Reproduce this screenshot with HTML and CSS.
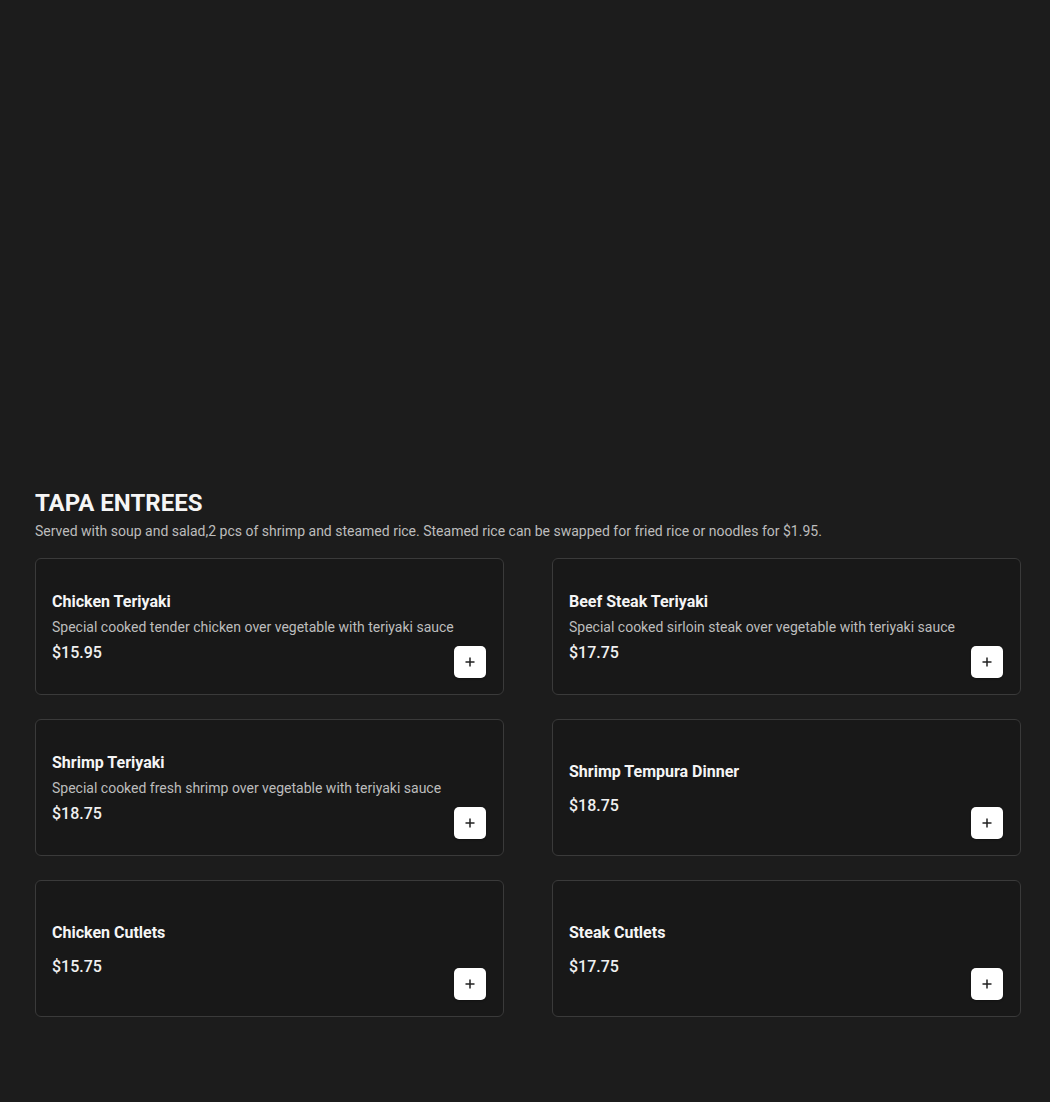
FILE: index.html
```html
<!DOCTYPE html>
<html lang="en">
<head>
<meta charset="utf-8">
<title>Tapa Entrees</title>
<link rel="stylesheet" href="styles.css">
</head>
<body>
<div class="hero"></div>
<section class="menu-section">
  <h2 class="section-title">TAPA ENTREES</h2>
  <p class="section-desc">Served with soup and salad,2 pcs of shrimp and steamed rice. Steamed rice can be swapped for fried rice or noodles for $1.95.</p>
  <div class="grid">
    <div class="card">
      <div class="info">
        <div class="name">Chicken Teriyaki</div>
        <div class="desc">Special cooked tender chicken over vegetable with teriyaki sauce</div>
        <div class="price">$15.95</div>
      </div>
      <button class="add" aria-label="Add"><svg viewBox="0 0 12 12" width="12" height="12"><path d="M6 1.5v9M1.5 6h9" stroke="#222" stroke-width="1.5" fill="none"/></svg></button>
    </div>
    <div class="card">
      <div class="info">
        <div class="name">Beef Steak Teriyaki</div>
        <div class="desc">Special cooked sirloin steak over vegetable with teriyaki sauce</div>
        <div class="price">$17.75</div>
      </div>
      <button class="add" aria-label="Add"><svg viewBox="0 0 12 12" width="12" height="12"><path d="M6 1.5v9M1.5 6h9" stroke="#222" stroke-width="1.5" fill="none"/></svg></button>
    </div>
    <div class="card">
      <div class="info">
        <div class="name">Shrimp Teriyaki</div>
        <div class="desc">Special cooked fresh shrimp over vegetable with teriyaki sauce</div>
        <div class="price">$18.75</div>
      </div>
      <button class="add" aria-label="Add"><svg viewBox="0 0 12 12" width="12" height="12"><path d="M6 1.5v9M1.5 6h9" stroke="#222" stroke-width="1.5" fill="none"/></svg></button>
    </div>
    <div class="card">
      <div class="info no-desc">
        <div class="name">Shrimp Tempura Dinner</div>
        <div class="price">$18.75</div>
      </div>
      <button class="add" aria-label="Add"><svg viewBox="0 0 12 12" width="12" height="12"><path d="M6 1.5v9M1.5 6h9" stroke="#222" stroke-width="1.5" fill="none"/></svg></button>
    </div>
    <div class="card">
      <div class="info no-desc">
        <div class="name">Chicken Cutlets</div>
        <div class="price">$15.75</div>
      </div>
      <button class="add" aria-label="Add"><svg viewBox="0 0 12 12" width="12" height="12"><path d="M6 1.5v9M1.5 6h9" stroke="#222" stroke-width="1.5" fill="none"/></svg></button>
    </div>
    <div class="card">
      <div class="info no-desc">
        <div class="name">Steak Cutlets</div>
        <div class="price">$17.75</div>
      </div>
      <button class="add" aria-label="Add"><svg viewBox="0 0 12 12" width="12" height="12"><path d="M6 1.5v9M1.5 6h9" stroke="#222" stroke-width="1.5" fill="none"/></svg></button>
    </div>
  </div>
</section>
</body>
</html>
```
FILE: styles.css
```css
* { box-sizing: border-box; }
html, body {
  margin: 0;
  background: #1c1c1c;
  color: #f2f2f2;
  font-family: Roboto, "Liberation Sans", Arial, sans-serif;
}
.hero { height: 487px; }
.menu-section { padding: 0 29px 86px 35px; }
.section-title {
  margin: 0;
  font-size: 24px;
  line-height: 32px;
  font-weight: 700;
  color: #f5f5f5;
}
.section-desc {
  margin: 2px 0 0;
  font-size: 14px;
  line-height: 20px;
  color: #bdbdbd;
}
.grid {
  margin-top: 17px;
  display: grid;
  grid-template-columns: 1fr 1fr;
  column-gap: 48px;
  row-gap: 24px;
}
.card {
  height: 137px;
  background: #181818;
  border: 1px solid #3a3a3a;
  border-radius: 6px;
  padding: 18px 16px 16px 16px;
  display: flex;
  align-items: center;
  justify-content: space-between;
}
.info { display: flex; flex-direction: column; }
.name {
  font-size: 16px;
  line-height: 24px;
  font-weight: 700;
  color: #f5f5f5;
}
.desc {
  margin-top: 3px;
  font-size: 14px;
  line-height: 20px;
  color: #bdbdbd;
}
.price {
  margin-top: 4px;
  font-size: 16px;
  line-height: 24px;
  font-weight: 500;
  color: #f0f0f0;
}
.no-desc .price { margin-top: 10px; }
.add {
  align-self: flex-end;
  width: 32px;
  height: 32px;
  margin: 0 1px 0 0;
  border: none;
  border-radius: 5px;
  background: #ffffff;
  padding: 0;
  display: flex;
  align-items: center;
  justify-content: center;
  box-shadow: 0 1px 2px rgba(0,0,0,0.3);
}
```
